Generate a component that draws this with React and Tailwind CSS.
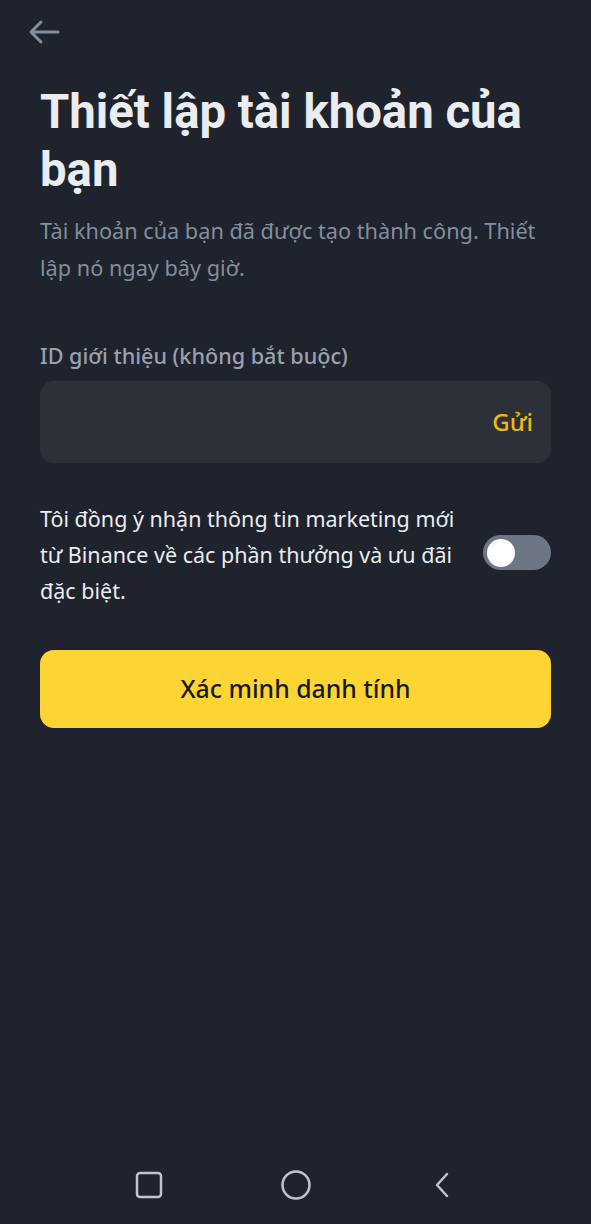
import { useState } from "react";

export default function App() {
  const [marketing, setMarketing] = useState(false);

  return (
    <div
      className="min-h-screen w-full bg-[#1f232d] flex flex-col"
      style={{ fontFamily: '"Noto Sans", "Open Sans", sans-serif' }}
    >
      {/* top bar */}
      <div className="h-[64px] px-[28px] flex items-center">
        <svg width="32" height="26" viewBox="0 0 32 26" fill="none">
          <path
            d="M30 13H4M13 3L3 13l10 10"
            stroke="#848e9c"
            strokeWidth="3"
            strokeLinecap="round"
            strokeLinejoin="round"
          />
        </svg>
      </div>

      <div className="px-[40px] flex-1 flex flex-col">
        <h1
          className="mt-[19px] text-[47.3px] leading-[58px] font-bold text-[#eaecef]"
          style={{ fontFamily: 'Roboto, "Noto Sans", sans-serif' }}
        >
          Thiết lập tài khoản của bạn
        </h1>

        <p className="mt-[13px] text-[21.7px] leading-[37px] text-[#848e9c]">
          Tài khoản của bạn đã được tạo thành công. Thiết lập nó ngay bây giờ.
        </p>

        <label className="mt-[55px] text-[21.6px] leading-[30px] font-medium text-[#9aa1ad]">
          ID giới thiệu (không bắt buộc)
        </label>

        <div className="mt-[10px] h-[82px] rounded-[14px] bg-[#2b3039] flex items-center pl-[20px] pr-[18px]">
          <input className="flex-1 bg-transparent outline-none text-[22px] text-[#eaecef]" />
          <button className="text-[24px] font-medium text-[#f0b90b]">Gửi</button>
        </div>

        <div className="mt-[38px] flex items-start justify-between">
          <p className="w-[420px] text-[21.5px] leading-[36px] text-[#eaecef]">
            Tôi đồng ý nhận thông tin marketing mới từ Binance về các phần thưởng và ưu đãi đặc biệt.
          </p>
          <button
            onClick={() => setMarketing(!marketing)}
            className={
              "mt-[34px] w-[68px] h-[35px] rounded-full flex items-center px-[4px] " +
              (marketing ? "bg-[#f0b90b] justify-end" : "bg-[#6e7686] justify-start")
            }
          >
            <span className="w-[28px] h-[28px] rounded-full bg-white block" />
          </button>
        </div>

        <button className="mt-[41px] h-[78px] rounded-[14px] bg-[#fcd535] text-[24.8px] font-medium text-[#181a20]">
          Xác minh danh tính
        </button>
      </div>

      {/* android nav bar */}
      <div className="h-[78px] flex items-center justify-center gap-[117px]">
        <svg width="28" height="28" viewBox="0 0 28 28" fill="none">
          <rect x="2" y="2" width="24" height="24" rx="3" stroke="#c1c4cc" strokeWidth="2.5" />
        </svg>
        <svg width="32" height="32" viewBox="0 0 32 32" fill="none">
          <circle cx="16" cy="16" r="13.5" stroke="#c1c4cc" strokeWidth="2.5" />
        </svg>
        <svg width="28" height="28" viewBox="0 0 28 28" fill="none">
          <path d="M18 3L8 14l10 11" stroke="#c1c4cc" strokeWidth="2.5" strokeLinecap="round" strokeLinejoin="round" />
        </svg>
      </div>
    </div>
  );
}
